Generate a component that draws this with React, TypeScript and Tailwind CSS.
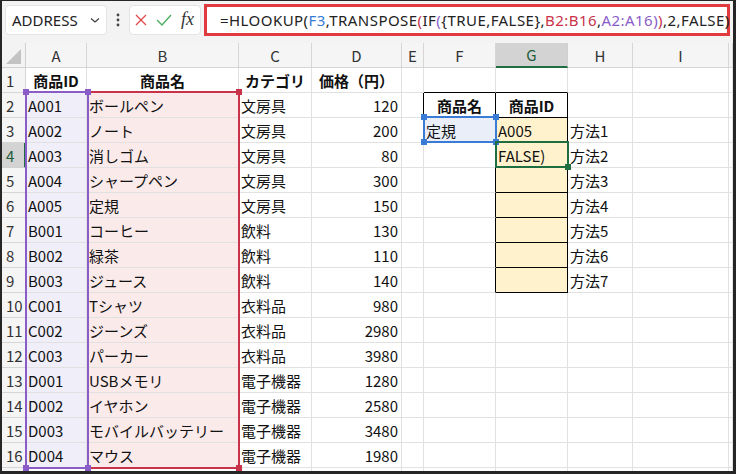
import React from 'react';

const items: string[][] = [
  ['A001', 'ボールペン', '文房具', '120'],
  ['A002', 'ノート', '文房具', '200'],
  ['A003', '消しゴム', '文房具', '80'],
  ['A004', 'シャープペン', '文房具', '300'],
  ['A005', '定規', '文房具', '150'],
  ['B001', 'コーヒー', '飲料', '130'],
  ['B002', '緑茶', '飲料', '110'],
  ['B003', 'ジュース', '飲料', '140'],
  ['C001', 'Tシャツ', '衣料品', '980'],
  ['C002', 'ジーンズ', '衣料品', '2980'],
  ['C003', 'パーカー', '衣料品', '3980'],
  ['D001', 'USBメモリ', '電子機器', '1280'],
  ['D002', 'イヤホン', '電子機器', '2580'],
  ['D003', 'モバイルバッテリー', '電子機器', '3480'],
  ['D004', 'マウス', '電子機器', '1980'],
];

const colLetters = ['A', 'B', 'C', 'D', 'E', 'F', 'G', 'H', 'I', ''];

type CellInfo = {
  t?: string;
  align?: 'l' | 'c' | 'r';
  bold?: boolean;
  bg?: string;
  blackR?: boolean;
  blackB?: boolean;
};

function getCell(r: number, c: number): CellInfo {
  const info: CellInfo = {};
  if (r === 1) {
    if (c === 1) Object.assign(info, { t: '商品ID', align: 'c', bold: true });
    if (c === 2) Object.assign(info, { t: '商品名', align: 'c', bold: true });
    if (c === 3) Object.assign(info, { t: 'カテゴリ', align: 'c', bold: true });
    if (c === 4) Object.assign(info, { t: '価格（円）', align: 'c', bold: true });
    if (c === 6 || c === 7) info.blackB = true;
  }
  if (r >= 2 && r <= 16) {
    const it = items[r - 2];
    if (c === 1) Object.assign(info, { t: it[0], align: 'l', bg: 'bg-[#f0eef9]' });
    if (c === 2) Object.assign(info, { t: it[1], align: 'l', bg: 'bg-[#fbeaea]' });
    if (c === 3) Object.assign(info, { t: it[2], align: 'l' });
    if (c === 4) Object.assign(info, { t: it[3], align: 'r' });
  }
  if (r === 2) {
    if (c === 5) info.blackR = true;
    if (c === 6) Object.assign(info, { t: '商品名', align: 'c', bold: true, blackR: true, blackB: true });
    if (c === 7) Object.assign(info, { t: '商品ID', align: 'c', bold: true, blackR: true, blackB: true });
  }
  if (r >= 3 && r <= 9) {
    if (c === 6) info.blackR = true;
    if (c === 7) Object.assign(info, { bg: 'bg-[#fff2cc]', blackR: true, blackB: true, align: 'l' });
    if (c === 8) Object.assign(info, { t: '方法' + (r - 2), align: 'l' });
  }
  if (r === 3) {
    if (c === 6) Object.assign(info, { t: '定規', align: 'l', bg: 'bg-[#e9eef8]' });
    if (c === 7) info.t = 'A005';
  }
  if (r === 4 && c === 7) info.t = 'FALSE)';
  return info;
}

const formula: [string, string][] = [
  ['=HLOOKUP(', 'text-[#222]'],
  ['F3', 'text-[#3a7bd5]'],
  [',TRANSPOSE', 'text-[#222]'],
  ['(', 'text-[#c8334a]'],
  ['IF', 'text-[#222]'],
  ['(', 'text-[#8a5cc8]'],
  ['{TRUE,FALSE},', 'text-[#222]'],
  ['B2:B16', 'text-[#c8334a]'],
  [',', 'text-[#222]'],
  ['A2:A16', 'text-[#8a5cc8]'],
  [')', 'text-[#8a5cc8]'],
  [')', 'text-[#c8334a]'],
  [',2,FALSE)', 'text-[#222]'],
];

function Handle({ pos, color }: { pos: 'tl' | 'tr' | 'bl' | 'br'; color: string }) {
  const p =
    pos === 'tl'
      ? '-left-[4px] -top-[4px]'
      : pos === 'tr'
      ? '-right-[4px] -top-[4px]'
      : pos === 'bl'
      ? '-left-[4px] -bottom-[4px]'
      : '-right-[4px] -bottom-[4px]';
  return <div className={`absolute w-[6px] h-[6px] ${p} ${color}`} />;
}

export default function App() {
  const rows: React.ReactNode[] = [];

  rows.push(
    <div key="corner" className="relative bg-[#f3f3f3] border-r border-b border-[#d0d0d0]">
      <svg className="absolute left-0 top-0" width="24" height="25" viewBox="0 0 24 25">
        <polygon points="4,21 19,21 19,6" fill="#c3c3c3" />
      </svg>
    </div>
  );
  colLetters.forEach((l, i) => {
    const sel = i === 6;
    rows.push(
      <div
        key={'h' + i}
        className={
          sel
            ? 'flex items-center justify-center bg-[#d3d3d3] border-r border-[#d0d0d0] border-b-2 border-b-[#1e6e42] text-[#1e5b38] text-[15px]'
            : 'flex items-center justify-center bg-[#f5f5f5] border-r border-b border-[#d6d6d6] text-[#333] text-[15px]'
        }
      >
        {l}
      </div>
    );
  });

  for (let r = 1; r <= 17; r++) {
    const selRow = r === 4;
    rows.push(
      <div
        key={'rh' + r}
        className={
          selRow
            ? 'flex items-center pl-[4px] bg-[#d3d3d3] border-b border-[#d0d0d0] border-r-2 border-r-[#1e6e42] text-[#1e5b38] text-[15px]'
            : 'flex items-center pl-[4px] bg-[#f5f5f5] border-r border-b border-[#d6d6d6] text-[#333] text-[15px]'
        }
      >
        {r <= 16 ? r : ''}
      </div>
    );
    for (let c = 1; c <= 10; c++) {
      const info = getCell(r, c);
      const al =
        info.align === 'c'
          ? 'justify-center'
          : info.align === 'r'
          ? 'justify-end pr-[3px]'
          : 'justify-start pl-[2px]';
      const br = info.blackR ? 'border-r-black' : 'border-r-[#e1e1e1]';
      const bb = info.blackB ? 'border-b-black' : 'border-b-[#e1e1e1]';
      rows.push(
        <div
          key={r + '-' + c}
          className={`flex items-center overflow-hidden whitespace-nowrap border-r border-b ${br} ${bb} ${
            info.bg ?? 'bg-white'
          } ${al} ${info.bold ? 'font-bold' : ''} text-[15px] text-[#111]`}
        >
          {info.t ?? ''}
        </div>
      );
    }
  }

  return (
    <div className="w-[736px] h-[474px] overflow-hidden bg-white border-solid border-[#262626] border-t border-l-2 border-r-[3px] border-b-[3px] flex flex-col font-['Noto_Sans_CJK_JP',sans-serif] leading-none">
      <div className="h-[42px] shrink-0 bg-[#f3f3f3] flex items-start pt-[4px] pl-[3px]">
        <div className="w-[102px] h-[30px] bg-white rounded-[4px] border border-[#e4e4e4] flex items-center pl-[6px] pr-[5px] justify-between">
          <span className="font-['Noto_Sans',sans-serif] text-[15px] text-[#222]">ADDRESS</span>
          <svg width="12" height="12" viewBox="0 0 12 12">
            <path d="M2 4.5 L6 8 L10 4.5" fill="none" stroke="#444" strokeWidth="1.3" />
          </svg>
        </div>
        <div className="w-[22px] h-[30px] flex items-center justify-center">
          <svg width="4" height="14" viewBox="0 0 4 14">
            <circle cx="2" cy="2" r="1.4" fill="#444" />
            <circle cx="2" cy="7" r="1.4" fill="#444" />
            <circle cx="2" cy="12" r="1.4" fill="#444" />
          </svg>
        </div>
        <div className="w-[72px] h-[30px] bg-white rounded-[4px] border border-[#e4e4e4] flex items-center pl-[5px] gap-[9px]">
          <svg width="12" height="12" viewBox="0 0 12 12">
            <path d="M1 1 L11 11 M11 1 L1 11" stroke="#e0484c" strokeWidth="1.3" fill="none" />
          </svg>
          <svg width="16" height="12" viewBox="0 0 16 12">
            <path d="M1 6 L6 11 L15 1" stroke="#4caf60" strokeWidth="1.4" fill="none" />
          </svg>
          <span className="font-['Liberation_Serif',serif] italic text-[18px] text-[#333] -mt-[2px]">fx</span>
        </div>
        <div className="ml-[3px] -mt-[1px] w-[526px] h-[32px] bg-white border-[3px] border-[#e23b3f] flex items-center pl-[13px] whitespace-nowrap">
          <span className="font-['Noto_Sans',sans-serif] text-[15px] tracking-[0.45px]">
            {formula.map(([s, cl], i) => (
              <span key={i} className={cl}>
                {s}
              </span>
            ))}
          </span>
        </div>
      </div>

      <div className="relative flex-1 overflow-hidden grid grid-cols-[24px_61px_152px_73px_90px_22px_72px_72px_65px_96px_1fr] auto-rows-[25px] content-start">
        {rows}

        <div className="absolute left-[85px] top-[48px] w-[153px] h-[378px] border-2 border-[#c8334a] pointer-events-none">
          <Handle pos="tr" color="bg-[#c8334a]" />
          <Handle pos="br" color="bg-[#c8334a]" />
        </div>
        <div className="absolute left-[23px] top-[48px] w-[64px] h-[378px] border-2 border-[#8a5cc8] pointer-events-none">
          <Handle pos="tl" color="bg-[#8a5cc8]" />
          <Handle pos="tr" color="bg-[#8a5cc8]" />
          <Handle pos="bl" color="bg-[#8a5cc8]" />
          <Handle pos="br" color="bg-[#8a5cc8]" />
        </div>
        <div className="absolute left-[421px] top-[73px] w-[74px] h-[27px] border-2 border-[#3a7bd5] pointer-events-none">
          <Handle pos="tl" color="bg-[#3a7bd5]" />
          <Handle pos="tr" color="bg-[#3a7bd5]" />
          <Handle pos="bl" color="bg-[#3a7bd5]" />
          <Handle pos="br" color="bg-[#3a7bd5]" />
        </div>
        <div className="absolute left-[493px] top-[98px] w-[74px] h-[27px] border-2 border-[#1e6e42] pointer-events-none">
          <Handle pos="br" color="bg-[#1e6e42]" />
        </div>
      </div>
    </div>
  );
}
